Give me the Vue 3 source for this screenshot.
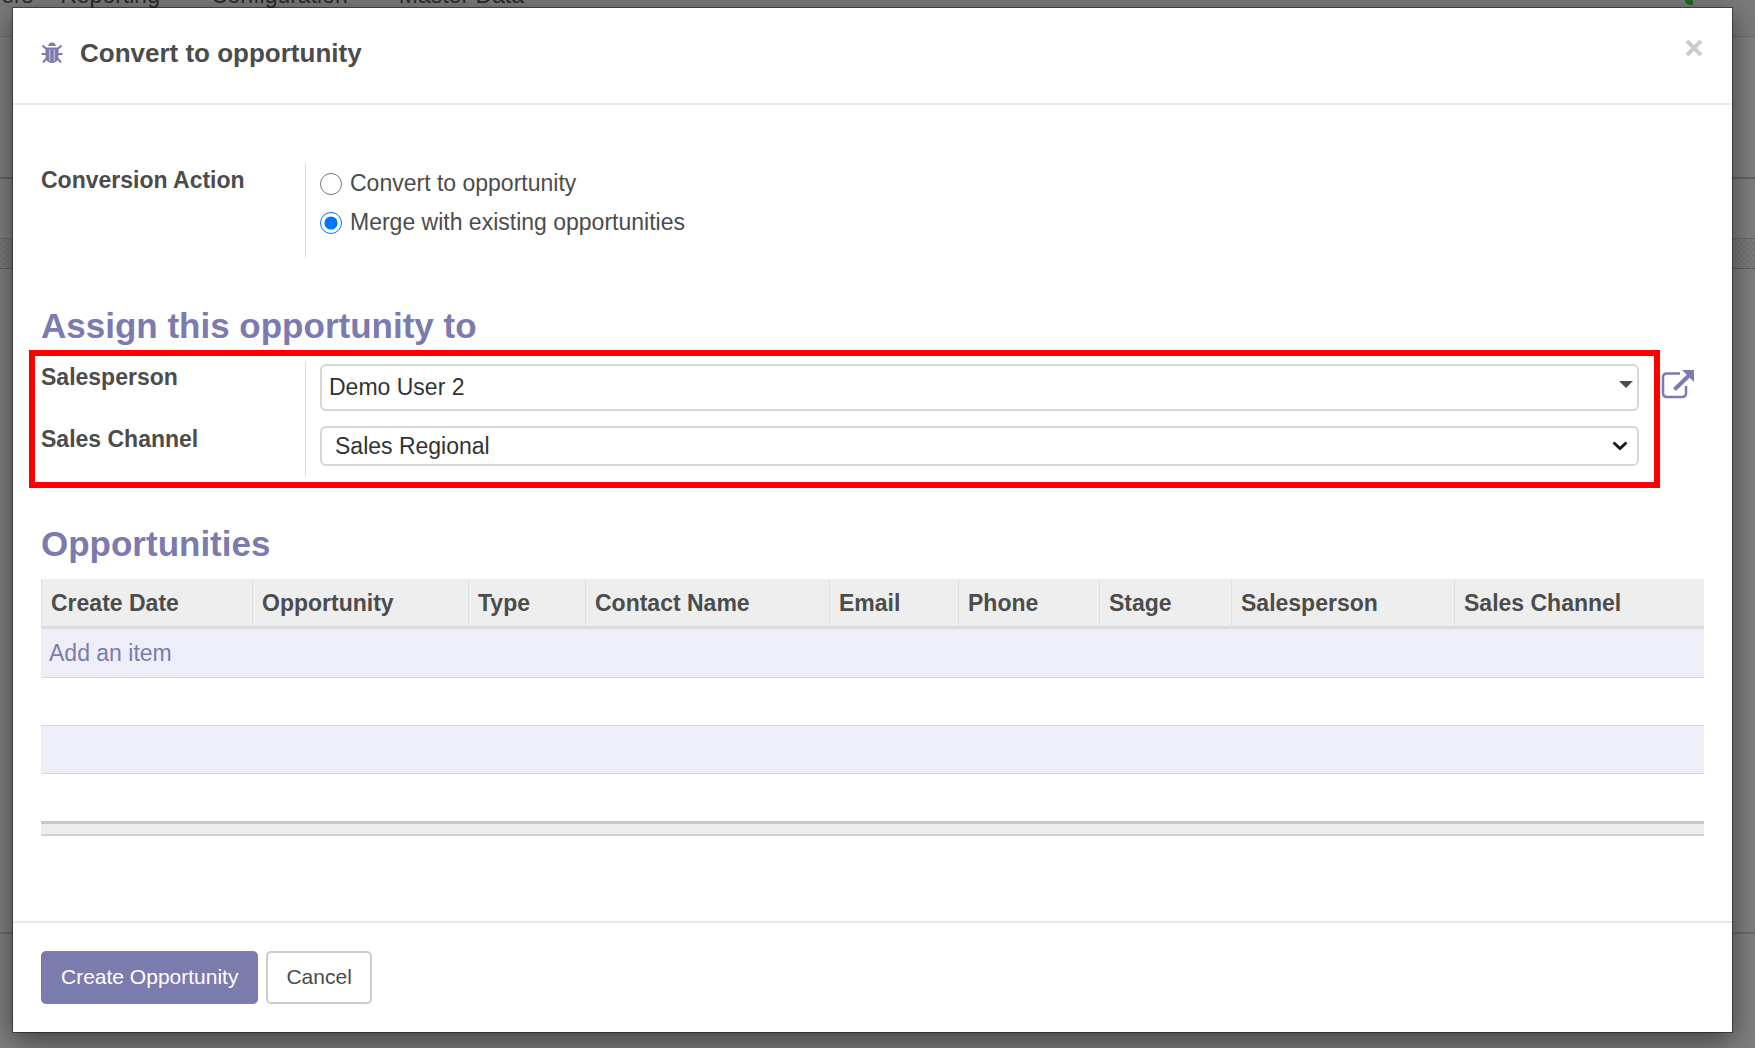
<script setup>
import { ref } from 'vue'

const action = ref('merge')
const salesperson = ref('Demo User 2')
const channel = ref('Sales Regional')

const menu = ['Customers', 'Reporting', 'Configuration', 'Master Data']

const columns = [
  { label: 'Create Date', weight: 211 },
  { label: 'Opportunity', weight: 216 },
  { label: 'Type', weight: 117 },
  { label: 'Contact Name', weight: 244 },
  { label: 'Email', weight: 129 },
  { label: 'Phone', weight: 141 },
  { label: 'Stage', weight: 132 },
  { label: 'Salesperson', weight: 223 },
  { label: 'Sales Channel', weight: 250 }
]
const total = columns.reduce((sum, c) => sum + c.weight, 0)
</script>

<template>
  <div class="page">
    <div class="backdrop" aria-hidden="true">
      <div class="topbar">
        <nav class="menu">
          <span v-for="item in menu" :key="item">{{ item }}</span>
        </nav>
        <span class="status"></span>
      </div>
      <div class="control-panel"></div>
      <div class="toolbar"></div>
      <div class="pattern"></div>
      <div class="sheet"></div>
    </div>

    <section class="modal" role="dialog" aria-labelledby="dialog-title">
      <header class="modal-header">
        <svg class="bug" viewBox="0 0 22 22" aria-hidden="true">
          <path class="legs" d="M1.500 3.500L6 7.500M20.500 3.500L16 7.500M0.500 12H5.500M21.500 12H16.500M2 20.500L6 16M20 20.500L16 16" />
          <path class="shell" d="M7.200 4Q7.500 0.500 11 0.500T14.800 4Z" />
          <path class="shell" d="M4.500 5.500H17.500V14Q17.500 20.500 11 21Q4.500 20.500 4.500 14Z" />
          <path class="stripe" d="M8.700 7.500V19M13.300 7.500V19" />
        </svg>
        <h1 id="dialog-title">Convert to opportunity</h1>
        <button class="close" type="button" aria-label="Close">
          <svg viewBox="0 0 18 18" aria-hidden="true"><path d="M2 2L16 16M16 2L2 16" /></svg>
        </button>
      </header>

      <div class="modal-body">
        <div class="group">
          <span id="action-label" class="label">Conversion Action</span>
          <div class="control radios" role="radiogroup" aria-labelledby="action-label">
            <label><input v-model="action" type="radio" name="action" value="convert" />Convert to opportunity</label>
            <label><input v-model="action" type="radio" name="action" value="merge" />Merge with existing opportunities</label>
          </div>
        </div>

        <h2>Assign this opportunity to</h2>
        <div class="group">
          <label class="label" for="salesperson">Salesperson</label>
          <div class="control">
            <div class="field">
              <input id="salesperson" v-model="salesperson" class="box person" type="text" />
              <svg class="caret" viewBox="0 0 14 7" aria-hidden="true"><path d="M0 0H14L7 7Z" /></svg>
            </div>
            <button class="external" type="button" aria-label="Open salesperson">
              <svg viewBox="0 0 34 30" aria-hidden="true">
                <path class="frame" d="M19 4.500H6Q2 4.500 2 8.500V24Q2 28 6 28H21Q25 28 25 24V17" />
                <path class="shaft" d="M13.500 20.500L28 6.500" />
                <path class="head" d="M21 1H33V13Z" />
              </svg>
            </button>
          </div>
          <label class="label" for="channel">Sales Channel</label>
          <div class="control last">
            <div class="field">
              <select id="channel" v-model="channel" class="box channel">
                <option>Sales Regional</option>
              </select>
              <svg class="chevron" viewBox="0 0 16 10" aria-hidden="true"><path d="M1.500 1.500L8 7.500L14.500 1.500" /></svg>
            </div>
          </div>
          <div class="highlight"></div>
        </div>

        <h2>Opportunities</h2>
        <table>
          <colgroup>
            <col v-for="c in columns" :key="c.label" :style="{ width: (c.weight / total) * 100 + '%' }" />
          </colgroup>
          <thead>
            <tr><th v-for="c in columns" :key="c.label" scope="col">{{ c.label }}</th></tr>
          </thead>
          <tbody>
            <tr><td :colspan="columns.length"><a href="#">Add an item</a></td></tr>
            <tr v-for="n in 3" :key="n"><td :colspan="columns.length"></td></tr>
          </tbody>
          <tfoot>
            <tr><td :colspan="columns.length"></td></tr>
          </tfoot>
        </table>
      </div>

      <footer class="modal-footer">
        <button class="btn primary" type="button">Create Opportunity</button>
        <button class="btn" type="button">Cancel</button>
      </footer>
    </section>
  </div>
</template>

<style>
body {
  margin: 0;
  background: #7e7e7e;
}
</style>

<style scoped>
.page {
  position: relative;
  box-sizing: border-box;
  min-height: 100vh;
  padding: 8px 23px 16px 13px;
  overflow: hidden;
  font-family: "Liberation Sans", Arial, sans-serif;
  font-size: 23px;
  color: #4c4c4c;
}
.page * {
  box-sizing: border-box;
}

.backdrop {
  position: absolute;
  inset: 0;
  display: flex;
  flex-direction: column;
  overflow: hidden;
}
.topbar {
  display: flex;
  justify-content: space-between;
  height: 37px;
  background: #7a7a7a;
  border-bottom: 1px solid #6c6c6c;
}
.menu {
  display: flex;
  gap: 51px;
  margin: -17px 0 0 -78px;
  line-height: 24px;
  color: #2b2b2b;
}
.menu span:first-child {
  margin-right: -24px;
}
.status {
  width: 8px;
  height: 5px;
  margin-right: 62px;
  background: #1f6b1f;
  border-bottom-left-radius: 8px;
}
.control-panel {
  height: 142px;
  border-bottom: 2px solid #636363;
}
.toolbar {
  height: 60px;
  border-bottom: 1px solid #6a6a6a;
}
.pattern {
  height: 30px;
  border-bottom: 1px solid #5f5f66;
  background: repeating-conic-gradient(#757575 0 25%, #7b7b7b 0 50%) 0 0 / 6px 6px;
}
.sheet {
  height: 665px;
  border-bottom: 2px solid #6b6b6b;
}

.modal {
  position: relative;
  background: #fff;
  box-shadow: 0 0 0 1px rgba(0, 0, 0, 0.4), 0 8px 26px rgba(0, 0, 0, 0.5);
}
.modal-header {
  display: flex;
  align-items: center;
  padding: 31px 29px 36px 28px;
  border-bottom: 2px solid #e8e8e8;
}
.bug {
  width: 22px;
  height: 22px;
}
.legs,
.stripe {
  fill: none;
  stroke: #7c7bad;
  stroke-width: 2;
}
.shell {
  fill: #7c7bad;
}
.stripe {
  stroke: #b4b3d2;
  stroke-width: 1.5;
}
h1 {
  flex: 1;
  margin: 0 0 0 17px;
  font-size: 26px;
  line-height: 28px;
}
.close {
  align-self: flex-start;
  display: flex;
  padding: 0;
  border: 0;
  background: none;
}
.close svg {
  width: 18px;
  height: 18px;
  fill: none;
  stroke: #ccc;
  stroke-width: 4;
}

.modal-body {
  padding: 59px 28px 85px 28px;
}
.group {
  position: relative;
  display: grid;
  grid-template-columns: 264px 1fr;
}
.label {
  font-weight: bold;
  line-height: 32px;
}
.control {
  display: flex;
  align-items: flex-start;
  padding: 3px 0 12px 14px;
  border-left: 1px solid #ddd;
}
.control.last {
  padding-bottom: 10px;
}
.radios {
  flex-direction: column;
  padding-top: 0;
  padding-bottom: 16px;
}
.radios label {
  display: flex;
  align-items: center;
  gap: 8px;
  height: 39px;
}
.radios input {
  width: 22px;
  height: 22px;
  margin: 0;
  accent-color: #0075ff;
}
h2 {
  margin: 48px 0 15px;
  font-size: 35px;
  line-height: 40px;
  color: #7c7bad;
}

.field {
  position: relative;
  flex: 1;
  margin-right: 65px;
}
.box {
  display: block;
  width: 100%;
  border: 2px solid #d6d6d6;
  border-radius: 6px;
  background: #fff;
  color: #333;
  font: inherit;
  appearance: none;
  outline: 0;
}
.person {
  height: 47px;
  padding: 0 36px 0 7px;
}
.channel {
  height: 40px;
  padding: 0 36px 0 13px;
}
.caret {
  position: absolute;
  top: 17px;
  right: 6px;
  width: 14px;
  height: 7px;
  fill: #4c4c4c;
}
.chevron {
  position: absolute;
  top: 15px;
  right: 11px;
  width: 16px;
  height: 10px;
  fill: none;
  stroke: #1a1a1a;
  stroke-width: 3;
}
.external {
  display: flex;
  margin: 5px 9px 0 -43px;
  padding: 0;
  border: 0;
  background: none;
}
.external svg {
  width: 34px;
  height: 30px;
}
.frame,
.shaft {
  fill: none;
  stroke: #7c7bad;
  stroke-width: 2.5;
}
.shaft {
  stroke-width: 4;
}
.head {
  fill: #7c7bad;
}
.highlight {
  position: absolute;
  inset: -11px 44px -12px -12px;
  border: 6px solid #f00;
  pointer-events: none;
}

table {
  width: 100%;
  border-collapse: separate;
  border-spacing: 0;
  table-layout: fixed;
}
th {
  height: 50px;
  padding: 1px 9px 0;
  text-align: left;
  background: #eee;
  border-left: 1px solid #dfdfdf;
  border-bottom: 3px solid #dcdcdc;
}
tbody td {
  height: 48px;
  padding: 0 8px;
}
tbody tr + tr td {
  border-top: 1px solid #d8d8da;
}
tbody tr:nth-child(odd) td {
  background: #eeeef8;
}
a {
  color: #7c7bad;
  text-decoration: none;
}
tfoot td {
  height: 15px;
  padding: 0;
  background: #eee;
  border-top: 3px solid #c8c8c8;
  border-bottom: 2px solid #cfcfcf;
}

.modal-footer {
  display: flex;
  gap: 8px;
  padding: 28px;
  border-top: 2px solid #e8e8e8;
}
.btn {
  height: 53px;
  padding: 0 18px 2px;
  border: 2px solid #ccc;
  border-radius: 5px;
  background: #fff;
  color: #4c4c4c;
  font-family: inherit;
  font-size: 21px;
}
.primary {
  border-color: #7c7bad;
  background: #7c7bad;
  color: #fff;
}
</style>
